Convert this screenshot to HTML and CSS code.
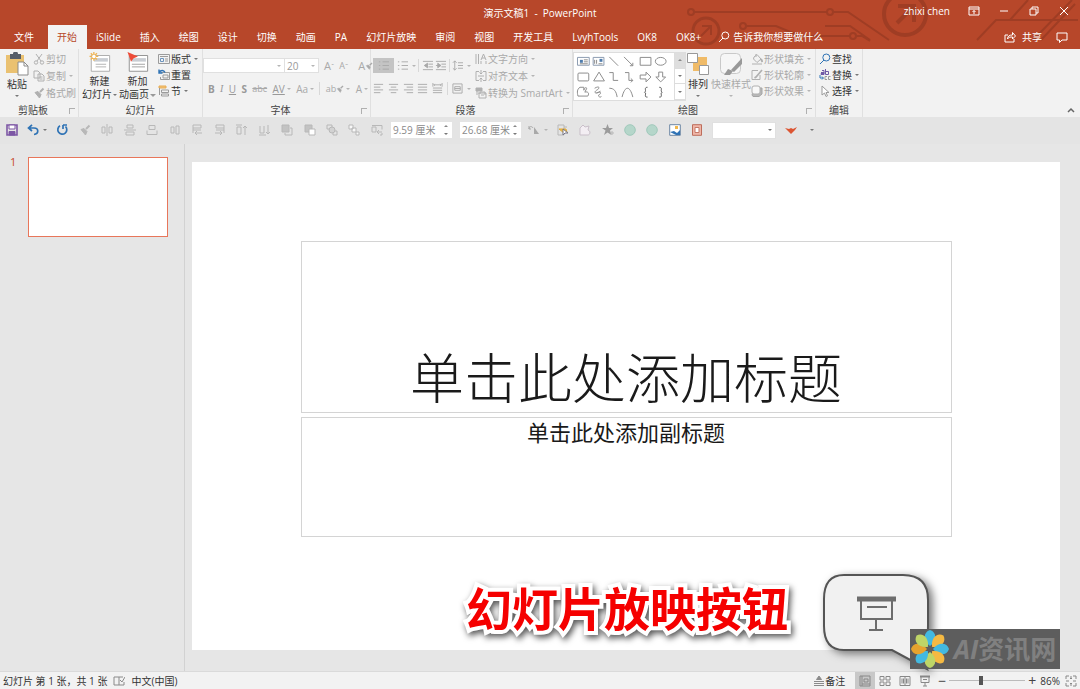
FILE: index.html
```html
<!DOCTYPE html>
<html lang="zh-CN">
<head>
<meta charset="utf-8">
<title>演示文稿1 - PowerPoint</title>
<link rel="stylesheet" href="styles.css">
</head>
<body>
<svg class="defs" aria-hidden="true">
  <symbol id="cut" viewBox="0 0 12 12"><path d="M3 1l5 7M9 1L4 8"/><circle cx="3" cy="9.500" r="1.700"/><circle cx="9" cy="9.500" r="1.700"/></symbol>
  <symbol id="copy" viewBox="0 0 12 12"><path d="M1 1h4l2 2v5H1zM5 4h4l2 2v5H5zM6.500 7h3M6.500 9h3"/></symbol>
  <symbol id="brush" viewBox="0 0 12 12"><path d="M10.500 1.500L7 5" stroke-width="2"/><path d="M2 5.500l3-1 3 3-1.500 3.500z" fill="currentColor"/></symbol>
  <symbol id="layout" viewBox="0 0 12 12"><path d="M.5 1.500h11v9H.5zM2 3.500h8"/><path d="M2.500 5.500h3v3h-3z" stroke="#6d94bd"/><path d="M7 6h3M7 8h3"/></symbol>
  <symbol id="reset" viewBox="0 0 12 12"><path d="M3 3.500h8.500v7h-9V8"/><path d="M5 6h5v3H5z"/><path d="M1 3.500c2-3 5-2.500 6 0M1 .5v3.500h3.500" stroke="#2f73b5" stroke-width="1.400"/></symbol>
  <symbol id="section" viewBox="0 0 12 12"><path d="M1 1h7v2H1z" fill="#f3c57a" stroke="#e8ab50"/><path d="M3.500 5h7v2.500h-7zM3.500 9h7v2h-7zM1.500 3v7"/></symbol>
  <symbol id="textdir" viewBox="0 0 12 12"><path d="M1 1v10M3.500 1v10M6 8v3M11 8v3M6 7l2.500-6L11 7M7 5h3"/></symbol>
  <symbol id="aligntext" viewBox="0 0 12 12"><path d="M4 1.500H1v9h3M8 1.500h3v9H8M6 0v4M4.500 2.500L6 4l1.500-1.500M6 12V8M4.500 9.500L6 8l1.500 1.500M3 6h6"/></symbol>
  <symbol id="smart" viewBox="0 0 12 12"><path d="M1 1h6v3H1z" fill="currentColor"/><path d="M3 6h3M5 5h5v3M4 6h7v5H4zM2 4v4M6 8h3"/></symbol>
  <symbol id="fill" viewBox="0 0 12 12"><path d="M3 4l3-2.500L10 6 6 9.500 2.500 6zM5 4V1M1 11h10"/><path d="M10 6l1.500 3" stroke-width="2"/></symbol>
  <symbol id="outline" viewBox="0 0 12 12"><path d="M7 1.500H1v9h8V6"/><path d="M11 1L5 8l-1.500 1" stroke-width="1.700"/></symbol>
  <symbol id="effect" viewBox="0 0 12 12"><path d="M3 3h8v6L8 11.500H2L1 10z" fill="#b8b8b8" stroke="#a5a5a5"/><rect x="1" y="1" width="8" height="8" rx="2" fill="#f8f8f8"/></symbol>
  <symbol id="search" viewBox="0 0 12 12"><circle cx="7.300" cy="4.500" r="3.500"/><path d="M5 7l-4 4"/></symbol>
  <symbol id="replace" viewBox="0 0 12 12"><path d="M2 3.500h3v2H2v-1h3M3 1.500h2v3M6.500 0v5.500h3v-3h-3" stroke="#715aa6"/><path d="M1 6v3h3M3 7.500L4.500 9 3 10.500" stroke="#2f73b5"/><path d="M8 7.500H6v3h2M11.500 7.500h-2v3h2"/></symbol>
  <symbol id="pointer" viewBox="0 0 12 12"><path d="M3 1v9l2.500-2 1.500 3.500 1.500-.7L7 7.500h3z" fill="#fff"/></symbol>
  <symbol id="list" viewBox="0 0 12 12"><path d="M1 2h1.500M1 6h1.500M1 10h1.500M5 2h7M5 6h7M5 10h7"/></symbol>
  <symbol id="outdent" viewBox="0 0 12 12"><path d="M1 1.500h11M7 4.500h5M7 7.500h5M1 10.500h11"/><path d="M6 3.500v5L2.500 6z" fill="currentColor"/></symbol>
  <symbol id="indent" viewBox="0 0 12 12"><path d="M1 1.500h11M7 4.500h5M7 7.500h5M1 10.500h11M1 6h3"/><path d="M3 3.500v5L6.500 6z" fill="currentColor"/></symbol>
  <symbol id="spacing" viewBox="0 0 12 12"><path d="M3 1v10M1 3l2-2 2 2M1 9l2 2 2-2M6.500 3H12M6.500 6H12M6.500 9H12"/></symbol>
  <symbol id="left" viewBox="0 0 12 12"><path d="M1 1.500h10M1 4.500h7M1 7.500h10M1 10.500h7"/></symbol>
  <symbol id="center" viewBox="0 0 12 12"><path d="M1 1.500h10M3 4.500h6M1 7.500h10M3 10.500h6"/></symbol>
  <symbol id="right" viewBox="0 0 12 12"><path d="M1 1.500h10M4 4.500h7M1 7.500h10M4 10.500h7"/></symbol>
  <symbol id="justify" viewBox="0 0 12 12"><path d="M1 1.500h10M1 4.500h10M1 7.500h10M1 10.500h10"/></symbol>
  <symbol id="distribute" viewBox="0 0 12 12"><path d="M1 0v4M11 0v4M2 2h8M3 1L2 2l1 1M9 1l1 1-1 1M1 5.500h10M1 8h10M1 10.500h10"/></symbol>
  <symbol id="columns" viewBox="0 0 12 12"><path d="M1 1h10v10H1zM3 4h6v4H3zM3 6h6"/></symbol>
  <symbol id="save" viewBox="0 0 12 12"><path d="M1 1h10v10H1z" stroke="#7d57a5" stroke-width="1.600"/><path d="M3 1h6v4H3z" fill="#fff" stroke="#7d57a5"/><path d="M3 7.500h6V11H3z" fill="#7d57a5" stroke="#7d57a5"/></symbol>
  <symbol id="undo" viewBox="0 0 12 12"><path d="M1.500 4H7c5 0 5 6 0 6.500M5 .8L1.500 4 5 7" stroke-width="1.700"/></symbol>
  <symbol id="redo" viewBox="0 0 12 12"><path d="M9.500 2.500A4.500 4.500 0 1 1 4 1.800M7 1h4M7 1v4" stroke-width="1.700"/></symbol>
  <symbol id="alv" viewBox="0 0 12 12"><path d="M6 0v12"/><path d="M1 3h3v6H1zM8 3h3v6H8z"/></symbol>
  <symbol id="alh" viewBox="0 0 12 12"><path d="M0 6h12M3 1h6v3H3zM2 8h8v3H2z"/></symbol>
  <symbol id="alm" viewBox="0 0 12 12"><path d="M3 1.500h6v4H3zM1 6.500v4h10v-4"/></symbol>
  <symbol id="alc" viewBox="0 0 12 12"><path d="M2 3h3v6H2zM7 2h3v8H7z"/></symbol>
  <symbol id="rotl" viewBox="0 0 12 12"><path d="M2 1h8v3H2zM2 6h8M11 9H4M6 7L4 9l2 2M2 4v5"/></symbol>
  <symbol id="rotr" viewBox="0 0 12 12"><path d="M2 1h8v3H2zM2 6h8M1 9h7M6 7l2 2-2 2M10 4v5"/></symbol>
  <symbol id="upb" viewBox="0 0 12 12"><path d="M0 1h6M1 3h4v7H1zM9 11V2M7 4l2-2 2 2"/></symbol>
  <symbol id="downb" viewBox="0 0 12 12"><path d="M0 11h7M1 2v7h4V2M9 1v9M7 8l2 2 2-2"/></symbol>
  <symbol id="front" viewBox="0 0 12 12"><path d="M1 1h7v7H1z" fill="#c3c3c3"/><path d="M9 4h2v7H4V9"/></symbol>
  <symbol id="back" viewBox="0 0 12 12"><path d="M1 1h7v7H1z" fill="#c3c3c3"/><path d="M5 5h6v6H5z" fill="#fff"/></symbol>
  <symbol id="group" viewBox="0 0 12 12"><path d="M1 1h5v4H1zM7 7h4v4H7z"/><circle cx="6" cy="6" r="3" fill="#d2d2d2"/></symbol>
  <symbol id="ungroup" viewBox="0 0 12 12"><path d="M1 1h4v4H1zM4 4h4v4H4zM8 8h3v3H8z" fill="#f8f8f8"/></symbol>
  <symbol id="swap" viewBox="0 0 12 12"><path d="M1 1.500h10v4M1 3h4v5H1zM11 8H6M8 6L6 8l2 2M9 11h2V9"/></symbol>
  <symbol id="tri" viewBox="0 0 12 12"><path d="M1 5c0-3 3-3 4-1M1 2v3h2"/><path d="M6 10V3l5 7z" fill="currentColor" stroke="none"/></symbol>
  <symbol id="selpane" viewBox="0 0 12 12"><path d="M1 1h6v10H1zM7 3h3"/><path d="M2 5h7l1 3-3 1z" fill="#f5c542" stroke="#e0a93c"/><path d="M6 5v6l2-2h3z" fill="#fff" stroke="#778"/></symbol>
  <symbol id="freeform" viewBox="0 0 12 12"><path d="M1 11V4l3-3 2 2 4-1-1 4c3 1 2 5 0 5z" fill="#f3eef3" stroke="#c9bfc9"/></symbol>
  <symbol id="star" viewBox="0 0 12 12"><path d="M5.500 0l1.500 4h4L8 6.500 9.500 11 5.500 8.500 2 11l1.500-4.500L0 4h4z" fill="#9b9b9b" stroke="none"/><path d="M8 9h4M10 7v4"/></symbol>
  <symbol id="dot" viewBox="0 0 12 12"><circle cx="6" cy="6" r="5.300" fill="#b5d6ca" stroke="#9fc8ba"/></symbol>
  <symbol id="pic" viewBox="0 0 12 12"><path d="M.7.700h10.600v10.600H.7z" fill="#fff" stroke="#6c86a3"/><path d="M1 8l4-1 3 2 3-3v5H7z" fill="#2f73b5" stroke="none"/><path d="M6 2h3v3H6z" fill="#f2b84b" stroke="none"/></symbol>
  <symbol id="crop" viewBox="0 0 12 12"><path d="M1.500.7h9v10.600h-9z" fill="#efb6a8" stroke="#bd6d5b"/><path d="M4 3.500h4v5H4z" fill="#fff" stroke="#c67867"/></symbol>
  <symbol id="bird" viewBox="0 0 12 12"><path d="M0 4l4 1 2-1 2 1 4-2-2 3-4 4-4-4z" fill="#dc5532" stroke="none"/></symbol>
  <symbol id="screen" viewBox="0 0 12 12"><path d="M1 1.500h10" stroke-width="2"/><path d="M2 2v5.500h8V2M4 4.500h4M6 7.500V11M4 11h4"/></symbol>
</svg>

<header class="header">
  <svg class="circuit" viewBox="0 0 400 49" aria-hidden="true">
    <g fill="none" stroke="#9f3d24" stroke-width="2">
      <circle cx="11" cy="12" r="3"/><path d="M14 12h133"/><circle cx="150" cy="12" r="3"/><path d="M153 12h15l41 28"/>
      <circle cx="26" cy="31" r="13" stroke-width="3"/><path d="M21 36l10-10M22 26h9v9" stroke-width="2"/>
      <circle cx="63" cy="26" r="3"/><path d="M66 26h30l24 10h50M145 26h25l20 14"/><circle cx="173" cy="36" r="3"/><path d="M176 36h6l8 5"/>
      <circle cx="225" cy="14" r="21" stroke-width="4"/><path d="M217 23l17-17M218 6h16v16" stroke-width="4"/>
      <path d="M297 40l19-20h82M353 40L392 0M361 40l34-36M330 20l18-20"/>
    </g>
  </svg>
  <div class="titlebar">
    <h1 class="doc-title">演示文稿1 &nbsp;-&nbsp; PowerPoint</h1>
    <div class="window-tools">
      <span class="user">zhixi chen</span>
      <button aria-label="功能区显示选项"><svg class="i" viewBox="0 0 12 12"><path d="M1 2h10v8H1zM1 4h10M6 9V5.500M4.500 7L6 5.500 7.500 7"/></svg></button>
      <button aria-label="最小化"><svg class="i" viewBox="0 0 12 12"><path d="M2 6h8"/></svg></button>
      <button aria-label="还原"><svg class="i" viewBox="0 0 12 12"><path d="M2 4h6v6H2zM4 4V2h6v6H8"/></svg></button>
      <button aria-label="关闭"><svg class="i" viewBox="0 0 12 12"><path d="M2 2l8 8M10 2l-8 8"/></svg></button>
    </div>
  </div>
  <div class="tabrow">
    <nav class="tabs">
      <button class="tab file">文件</button><button class="tab active">开始</button><button class="tab">iSlide</button><button class="tab">插入</button><button class="tab">绘图</button><button class="tab">设计</button><button class="tab">切换</button><button class="tab">动画</button><button class="tab">PA</button><button class="tab">幻灯片放映</button><button class="tab">审阅</button><button class="tab">视图</button><button class="tab">开发工具</button><button class="tab">LvyhTools</button><button class="tab">OK8</button><button class="tab">OK8+</button>
      <button class="tell"><svg class="i"><use href="#search"/></svg>告诉我你想要做什么</button>
    </nav>
    <div class="share">
      <button><svg class="i" viewBox="0 0 12 12"><path d="M4 4H1v7h9V8M3.500 8c0-3 2-4 5-4V1.500L11.500 5 8.500 8V6c-2 0-4 0-5 2z"/></svg>共享</button>
      <button aria-label="批注"><svg class="i" viewBox="0 0 12 12"><path d="M1 2h10v7H6l-2.500 2.500V9H1z"/></svg></button>
    </div>
  </div>
</header>

<section class="ribbon">
  <div class="group clipboard">
    <div class="body">
      <button class="big"><svg class="pic" viewBox="0 0 24 24"><path d="M1 3h18v18H1z" fill="#eac171"/><path d="M5 2h3a2.500 2.500 0 0 1 5 0h3v5H5z" fill="#555d68"/><path d="M13 10h6l4 4v9H13z" fill="#fff" stroke="#8b8b8b"/><path d="M19 10v4h4" fill="none" stroke="#8b8b8b"/></svg><span>粘贴</span><i class="caret"></i></button>
      <div class="stack off">
        <button><svg class="i"><use href="#cut"/></svg>剪切</button>
        <button><svg class="i"><use href="#copy"/></svg>复制<i class="caret"></i></button>
        <button><svg class="i"><use href="#brush"/></svg>格式刷</button>
      </div>
    </div>
    <div class="label"><span>剪贴板</span><button class="launch" aria-label="剪贴板选项"></button></div>
  </div>
  <div class="group slides">
    <div class="body">
      <button class="big"><svg class="pic" viewBox="0 0 24 24"><path d="M2 4h21v18H2z" fill="#fff" stroke="#a5a5a5"/><path d="M5 7h16v4H5z" fill="#c9cdd3"/><path d="M7 14h12M7 17h12" stroke="#aaa"/><path d="M5 0v10M0 5h10M1.500 1.500l7 7M8.500 1.500l-7 7" stroke="#f0b452" stroke-width="1.500"/><circle cx="5" cy="5" r="2" fill="#fff"/></svg><span>新建</span><span>幻灯片<i class="caret"></i></span></button>
      <button class="big"><svg class="pic" viewBox="0 0 24 24"><path d="M2 4h21v18H2z" fill="#fff" stroke="#888"/><path d="M5 7h16v4H5z" fill="#c9cdd3"/><path d="M5 14h15M5 17h15" stroke="#999"/><path d="M0 0l12 5-5 2-3 4z" fill="#ed4b38"/></svg><span>新加</span><span>动画页<i class="caret hollow"></i></span></button>
      <div class="stack tight">
        <button><svg class="i"><use href="#layout"/></svg>版式<i class="caret"></i></button>
        <button><svg class="i"><use href="#reset"/></svg>重置</button>
        <button><svg class="i"><use href="#section"/></svg>节<i class="caret"></i></button>
      </div>
    </div>
    <div class="label"><span>幻灯片</span></div>
  </div>
  <div class="group font off">
    <div class="body rows">
      <div class="row">
        <label class="combo face"><select aria-label="字体"><option></option></select><i class="caret"></i></label>
        <label class="combo size"><select aria-label="字号"><option>20</option></select><i class="caret"></i></label>
        <button class="glyph grow">A<sup>ˆ</sup></button><button class="glyph shrink">A<sup>ˇ</sup></button><i class="sep"></i><button class="glyph" aria-label="清除格式">A<svg class="i mini"><use href="#brush"/></svg></button>
      </div>
      <div class="row marks">
        <button class="glyph"><b>B</b></button><button class="glyph serif"><em>I</em></button><button class="glyph"><u>U</u></button><button class="glyph"><b>S</b></button><button class="glyph small"><s>abc</s></button>
        <button class="glyph"><u>AV</u><i class="caret"></i></button><button class="glyph">Aa<i class="caret"></i></button><i class="sep"></i><button class="glyph small">ab<svg class="i mini"><use href="#brush"/></svg><i class="caret"></i></button><button class="glyph">A<i class="caret"></i></button>
      </div>
    </div>
    <div class="label"><span>字体</span><button class="launch" aria-label="字体选项"></button></div>
  </div>
  <div class="group paragraph off">
    <div class="body">
      <div class="rows">
        <div class="row">
          <button class="pressed" aria-label="项目符号"><svg class="i"><use href="#list"/></svg></button><button aria-label="编号"><svg class="i"><use href="#list"/></svg><i class="caret"></i></button><i class="sep"></i><button aria-label="减少缩进"><svg class="i"><use href="#outdent"/></svg></button><button aria-label="增加缩进"><svg class="i"><use href="#indent"/></svg></button><i class="sep"></i><button aria-label="行距"><svg class="i"><use href="#spacing"/></svg><i class="caret"></i></button>
        </div>
        <div class="row aligns">
          <button aria-label="左对齐"><svg class="i"><use href="#left"/></svg></button><button aria-label="居中"><svg class="i"><use href="#center"/></svg></button><button aria-label="右对齐"><svg class="i"><use href="#right"/></svg></button><button aria-label="两端对齐"><svg class="i"><use href="#justify"/></svg></button><button aria-label="分散对齐"><svg class="i"><use href="#distribute"/></svg></button><i class="sep"></i><button aria-label="分栏"><svg class="i"><use href="#columns"/></svg><i class="caret"></i></button>
        </div>
      </div>
      <div class="stack">
        <button><svg class="i"><use href="#textdir"/></svg>文字方向<i class="caret"></i></button>
        <button><svg class="i"><use href="#aligntext"/></svg>对齐文本<i class="caret"></i></button>
        <button><svg class="i"><use href="#smart"/></svg>转换为 SmartArt<i class="caret"></i></button>
      </div>
    </div>
    <div class="label"><span>段落</span><button class="launch" aria-label="段落选项"></button></div>
  </div>
  <div class="group drawing">
    <div class="body">
      <div class="gallery">
        <svg class="shapes" viewBox="0 0 100 48" aria-label="形状"><g fill="none" stroke="#8b8b8b">
          <path d="M2.500 4.500h12v8h-12z" stroke="#8b9bb0"/><path d="M5 7h3v3H5z" fill="#4f7cac" stroke="none"/><path d="M9 7h4M9 9h4M5 11h8"/>
          <path d="M18.500 4.500h11v8h-11z" stroke="#8b9bb0"/><path d="M25 6h3v3h-3z" fill="#4f7cac" stroke="none"/><path d="M20 7v4M22 7v4M24 11h4"/>
          <path d="M35 4l9 9M50 4l9 9M59 10v3h-3M66.500 4.500h11v8h-11z"/><ellipse cx="87.500" cy="8.500" rx="5.500" ry="4"/>
          <rect x="3" y="20.500" width="11" height="8" rx="1"/><path d="M24.500 19.500l5.500 9H19zM35 20h4v8h5M51 20h4v8h4M57 26l2 2-2 2M66.500 22.500h6v-3l5 5-5 5v-3h-6zM85.500 19.500h4v5h3l-5 5-5-5h3z"/>
          <path d="M9 35H5c-3 2-3 5-2 9h10c2-3 0-5-3-4l2-4c-1-1-2-1-3 2zM20 36c5-3 6 0 2 2-4 3 0 4 4 1M22 41c5-3 5 1 2 2 0 2 2 3 3 1M35 36c5 0 7 3 8 9M48 45c3-12 8-12 11 0"/>
          <path d="M74 35c-3 0-2 2-2 4l-1 1 1 1c0 3-1 4 2 4M86 35c3 0 2 2 2 4l1 1-1 1c0 3 1 4-2 4" stroke="#555"/>
        </g></svg>
        <div class="scroll"><button aria-label="上一行"><i class="caret up"></i></button><button aria-label="下一行"><i class="caret"></i></button><button aria-label="更多形状"><i class="caret"></i></button></div>
      </div>
      <button class="big"><svg class="pic" viewBox="0 0 24 24"><path d="M7 5h14v14H7z" fill="#f0bb68"/><path d="M1.500 1.500h10v9h-10zM13.500 13.500h9v9h-9z" fill="#fff" stroke="#999"/></svg><span>排列</span><i class="caret"></i></button>
      <button class="big off quick"><svg class="pic" viewBox="0 0 24 24"><rect x="1.500" y="1.500" width="20" height="20" rx="4" fill="#f6f6f6" stroke="#c9c9c9"/><path d="M23 6v6l-8 8-3-2z" fill="#999"/><path d="M5 23l4-6 5 2-3 4z" fill="#999"/></svg><span>快速样式</span><i class="caret"></i></button>
      <div class="stack tight off">
        <button><svg class="i"><use href="#fill"/></svg>形状填充<i class="caret"></i></button>
        <button><svg class="i"><use href="#outline"/></svg>形状轮廓<i class="caret"></i></button>
        <button><svg class="i"><use href="#effect"/></svg>形状效果<i class="caret"></i></button>
      </div>
    </div>
    <div class="label"><span>绘图</span><button class="launch" aria-label="绘图选项"></button></div>
  </div>
  <div class="group editing">
    <div class="body">
      <div class="stack tight">
        <button><svg class="i blue"><use href="#search"/></svg>查找</button>
        <button><svg class="i"><use href="#replace"/></svg>替换<i class="caret"></i></button>
        <button><svg class="i"><use href="#pointer"/></svg>选择<i class="caret"></i></button>
      </div>
    </div>
    <div class="label"><span>编辑</span></div>
  </div>
  <button class="collapse" aria-label="折叠功能区"><svg class="i" viewBox="0 0 12 12"><path d="M3 8l3-3 3 3" stroke-width="1.500"/></svg></button>
</section>

<div class="quickbar">
  <button aria-label="保存"><svg class="i"><use href="#save"/></svg></button>
  <button class="blue" aria-label="撤消"><svg class="i"><use href="#undo"/></svg><i class="caret"></i></button>
  <button class="blue" aria-label="重做"><svg class="i"><use href="#redo"/></svg></button>
  <div class="strip">
    <svg class="i"><use href="#brush"/></svg><svg class="i"><use href="#alv"/></svg><svg class="i"><use href="#alh"/></svg><svg class="i"><use href="#alm"/></svg><svg class="i"><use href="#alc"/></svg><svg class="i"><use href="#rotl"/></svg><svg class="i"><use href="#rotr"/></svg><svg class="i"><use href="#upb"/></svg><svg class="i"><use href="#downb"/></svg><svg class="i"><use href="#front"/></svg><svg class="i"><use href="#back"/></svg><svg class="i"><use href="#group"/></svg><svg class="i"><use href="#ungroup"/></svg><svg class="i"><use href="#swap"/></svg>
  </div>
  <label class="spin"><input type="text" value="9.59 厘米" aria-label="高度"><span><i class="caret up"></i><i class="caret"></i></span></label>
  <label class="spin"><input type="text" value="26.68 厘米" aria-label="宽度"><span><i class="caret up"></i><i class="caret"></i></span></label>
  <button class="tri off" aria-label="旋转"><svg class="i"><use href="#tri"/></svg><i class="caret"></i></button>
  <div class="strip second">
    <svg class="i"><use href="#selpane"/></svg><svg class="i"><use href="#freeform"/></svg><svg class="i"><use href="#star"/></svg><svg class="i"><use href="#dot"/></svg><svg class="i"><use href="#dot"/></svg><svg class="i"><use href="#pic"/></svg><svg class="i"><use href="#crop"/></svg>
  </div>
  <label class="combo macro"><select aria-label="样式"><option></option></select><i class="caret"></i></label>
  <button aria-label="插件"><svg class="i"><use href="#bird"/></svg></button>
  <button aria-label="自定义快速访问工具栏"><i class="caret"></i></button>
</div>

<main class="work">
  <aside class="thumbs"><span class="num">1</span><button class="thumb" aria-label="幻灯片 1"></button></aside>
  <div class="canvas">
    <article class="slide">
      <h2 class="holder title">单击此处添加标题</h2>
      <p class="holder subtitle">单击此处添加副标题</p>
    </article>
  </div>
  <div class="note">幻灯片放映按钮</div>
  <svg class="callout" viewBox="0 0 130 110" aria-hidden="true">
    <path d="M29 10H88Q113 10 113 35V60Q113 83 106 88L112 104 77 85H29Q9 85 9 61V34Q9 10 29 10Z" fill="#f1f1f1" stroke="#555" stroke-width="2"/>
    <g fill="none" stroke="#6d6d6d" stroke-width="2"><path d="M42 34h39" stroke-width="5"/><path d="M46 36v18h31V36M52 42h20M61 54v11M54 65h14"/></g>
  </svg>
  <div class="brand">
    <svg viewBox="0 0 40 40" aria-hidden="true">
      <defs><path id="petal-y" d="M20 17C13 12 13 3 20 1c7 2 7 11 0 16z" fill="#f5b942"/><path id="petal-b" d="M20 17C13 12 13 3 20 1c7 2 7 11 0 16z" fill="#43b9e0"/><path id="petal-g" d="M20 17C13 12 13 3 20 1c7 2 7 11 0 16z" fill="#bed567"/><path id="petal-o" d="M20 17C13 12 13 3 20 1c7 2 7 11 0 16z" fill="#e6a32e"/></defs>
      <use href="#petal-b"/><use href="#petal-y" transform="rotate(45 20 20)"/><use href="#petal-b" transform="rotate(90 20 20)"/><use href="#petal-y" transform="rotate(135 20 20)"/><use href="#petal-g" transform="rotate(180 20 20)"/><use href="#petal-b" transform="rotate(225 20 20)"/><use href="#petal-o" transform="rotate(270 20 20)"/><use href="#petal-g" transform="rotate(315 20 20)"/>
    </svg><span><em>AI</em>资讯网</span>
  </div>
</main>

<footer class="status">
  <span>幻灯片 第 1 张，共 1 张</span>
  <svg class="i soft" viewBox="0 0 12 12"><path d="M6 2H1v8h5M6 2v8M6 2h4M6 10h5V7M7 5l2 2 3-5"/></svg>
  <span>中文(中国)</span>
  <div class="status-right">
    <button class="notes"><svg class="i soft" viewBox="0 0 12 12"><path d="M6 1L3.500 4.500h5z" fill="currentColor"/><path d="M1 6.500h10M1 8.500h10M1 10.500h10"/></svg>备注</button>
    <button class="view on" aria-label="普通视图"><svg class="i" viewBox="0 0 12 12"><path d="M1 1h10v10H1zM3 1v10M5 4h4v3H5zM3 9h8"/></svg></button>
    <button class="view" aria-label="幻灯片浏览"><svg class="i" viewBox="0 0 12 12"><path d="M1 1.500h4v3.500H1zM7 1.500h4v3.500H7zM1 7h4v3.500H1zM7 7h4v3.500H7z"/></svg></button>
    <button class="view" aria-label="阅读视图"><svg class="i" viewBox="0 0 12 12"><path d="M1 1.500h10v9H1zM6 1v10M3 3.500v5M4.500 3.500v5M7.500 3.500v5M9 3.500v5"/></svg></button>
    <button class="view" aria-label="幻灯片放映"><svg class="i"><use href="#screen"/></svg></button>
    <button class="zoom-step" aria-label="缩小">−</button>
    <input class="zoom" type="range" min="10" max="400" value="172" aria-label="缩放">
    <button class="zoom-step" aria-label="放大">+</button>
    <span class="percent">86%</span>
    <button aria-label="适应窗口"><svg class="i" viewBox="0 0 12 12"><path d="M1 4V1h3M8 1h3v3M11 8v3H8M4 11H1V8M6 1v3M6 8v3M1 6h3M8 6h3M5 3l1 1 1-1M5 9l1-1 1 1"/></svg></button>
  </div>
</footer>
</body>
</html>
```
FILE: styles.css
```css
* { box-sizing: border-box; }
body {
  margin: 0;
  min-height: 100vh;
  display: flex;
  flex-direction: column;
  background: #e6e6e6;
  color: #333;
  font: 10px/14px "Open Sans", "Noto Sans CJK SC", sans-serif;
}
button {
  display: flex;
  align-items: center;
  margin: 0;
  padding: 0;
  border: 0;
  background: none;
  color: inherit;
  font: inherit;
  white-space: nowrap;
}
.defs { position: absolute; width: 0; height: 0; }
.i {
  flex: none;
  width: 12px;
  height: 12px;
  fill: none;
  stroke: currentColor;
}
.mini { width: 8px; height: 8px; }
.soft { color: #8a8a8a; }
.blue { color: #2f73b5; }
.off { color: #a9a9a9; }
.caret {
  flex: none;
  display: inline-block;
  margin-left: 4px;
  border: 2px solid transparent;
  border-top-color: #777;
  border-bottom: 0;
  vertical-align: middle;
}
.off .caret { border-top-color: #b5b5b5; }
.caret.up { border-top: 0; border-bottom: 2px solid #888; }
.caret.hollow { border-width: 3px; border-bottom: 0; border-top-color: #999; }
.sep { width: 1px; height: 13px; background: #d8d8d8; }

/* Title bar and tabs */
.header { position: relative; background: #b7472a; color: #fff; }
.circuit { position: absolute; right: 0; top: 0; width: 400px; height: 49px; }
.titlebar {
  position: relative;
  display: grid;
  grid-template-columns: 1fr auto 1fr;
  align-items: center;
  height: 25px;
}
.doc-title { grid-column: 2; margin: 0; font: inherit; }
.window-tools {
  display: flex;
  align-items: center;
  justify-content: flex-end;
  gap: 18px;
  padding: 0 10px 3px 0;
}
.tabrow { position: relative; display: flex; justify-content: space-between; height: 24px; }
.tabs { display: flex; }
.tab { padding: 0 10px 0 9px; }
.tab.file { padding: 0 14px; }
.tab.active { background: #f3f3f3; color: #b7472a; }
.tell { gap: 3px; padding-left: 7px; }
.share { display: flex; gap: 14px; padding-right: 12px; }
.share button { gap: 6px; }

/* Ribbon */
.ribbon { display: flex; height: 68px; background: #f2f2f2; }
.group {
  display: flex;
  flex-direction: column;
  justify-content: space-between;
  border-right: 1px solid #e0e0e0;
}
.clipboard { width: 79px; }
.slides { width: 124px; }
.font { width: 168px; }
.paragraph { width: 202px; }
.drawing { width: 243px; }
.editing { width: 47px; }
.body { display: flex; height: 52px; padding-top: 2px; }
.label { display: flex; height: 13px; color: #444; line-height: 12px; }
.label span { flex: 1; text-align: center; }
.launch { width: 12px; justify-content: center; }
.launch::before {
  content: "";
  width: 5px;
  height: 5px;
  border: 1px solid #b0b0b0;
  border-width: 1px 0 0 1px;
}
.big { flex-direction: column; justify-content: flex-start; line-height: 13px; }
.big .pic { width: 24px; height: 24px; margin: 1px 0 2px; }
.big > .caret { margin: 4px 0 0; }
.big span .caret { margin-left: 1px; }
.stack { display: flex; flex-direction: column; justify-content: space-between; }
.stack button { gap: 1px; height: 16px; }
.stack.tight { justify-content: flex-start; }
.stack .i { color: #9b9b9b; }
.off .stack .i, .stack.off .i { color: #b0b0b0; }
.stack .i.blue { color: #2f73b5; }
.stack .caret { margin-left: 2px; }
.clipboard .body { gap: 4px; padding-left: 5px; }
.slides .body { gap: 2px; padding-left: 3px; }
.rows { display: flex; flex-direction: column; gap: 8px; padding-top: 7px; }
.font .rows { padding-top: 9px; }
.row { display: flex; align-items: center; gap: 5px; height: 15px; }
.combo { display: flex; flex: none; align-items: center; height: 15px; padding-right: 3px; background: #fff; border: 1px solid #e0e0e0; }
.combo select { flex: 1; min-width: 0; padding: 0 2px; border: 0; background: none; appearance: none; color: #999; font: inherit; }
.combo.face { width: 82px; margin-right: -6px; }
.combo.size { width: 35px; }
.glyph { font-size: 11px; }
.glyph sup { font-size: 8px; line-height: 8px; }
.glyph.shrink, .glyph.small { font-size: 9px; }
.glyph.serif { font-family: "Liberation Serif", serif; }
.marks { gap: 0; justify-content: space-between; padding: 0 2px 0 5px; }
.marks .glyph { font-size: 10px; }
.marks .glyph.small { font-size: 9px; }
.marks .caret { margin-left: 2px; }
.marks b, .marks u, .marks em { color: #999; }
.paragraph .body { gap: 4px; padding-left: 2px; }
.paragraph .rows { width: 98px; }
.paragraph .row { gap: 1px; justify-content: space-between; }
.paragraph .rows .i { width: 11px; height: 11px; }
.pressed { width: 21px; height: 15px; justify-content: center; background: #c4c4c4; }
.gallery { display: flex; height: 49px; margin-top: 1px; border: 1px solid #ddd; background: #fff; }
.shapes { width: 100px; height: 47px; }
.scroll { display: flex; flex-direction: column; width: 11px; border-left: 1px solid #ddd; }
.scroll button { flex: 1; justify-content: center; border-bottom: 1px solid #ddd; }
.scroll button:first-child { background: #dedede; }
.scroll .caret { margin: 0; }
.quick { margin-left: 1px; }
.editing .body { padding-left: 3px; }
.collapse { align-self: flex-end; margin-left: auto; padding: 0 3px 1px 0; color: #666; }

/* Quick access toolbar */
.quickbar { display: flex; align-items: center; height: 27px; padding: 0 0 1px 6px; gap: 9px; background: #e4e4e4; }
.quickbar .blue .caret { margin-left: 4px; }
.strip { display: flex; justify-content: space-between; width: 304px; margin-left: 2px; color: #b8b8b8; }
.strip.second { width: 146px; margin: 0; }
.spin { display: flex; width: 61px; height: 16px; margin-left: -1px; padding-right: 4px; background: #fff; }
.spin input { flex: 1; min-width: 0; padding: 0 0 0 2px; border: 0; background: none; color: #8a8a8a; font: inherit; }
.spin span { display: flex; flex-direction: column; justify-content: space-around; }
.spin .caret { margin: 0; }
.tri { margin-left: -2px; }
.combo.macro { width: 64px; height: 17px; }

/* Work area */
.work { position: relative; display: flex; flex: 1; }
.thumbs { display: flex; align-items: flex-start; width: 185px; padding: 13px 16px 0 10px; gap: 12px; border-right: 1px solid #d2d2d2; }
.num { color: #c8492a; font-size: 11px; line-height: 10px; }
.thumb { flex: 1; height: 80px; border: 1px solid #e8765a; background: #fff; }
.canvas { flex: 1; padding: 18px 20px 20px 7px; }
.slide {
  display: flex;
  flex-direction: column;
  align-items: center;
  gap: 4px;
  width: 100%;
  aspect-ratio: 16 / 9;
  padding-top: 79px;
  background: #fff;
  color: #1a1a1a;
}
.holder { width: 75%; margin: 0; border: 1px solid #d4d4d4; text-align: center; font-family: "Noto Sans CJK SC", sans-serif; }
.title { display: flex; align-items: flex-end; justify-content: center; height: 172px; font-size: 54px; line-height: 72px; font-weight: 300; }
.subtitle { height: 120px; font-size: 22px; line-height: 26px; }
.note {
  position: absolute;
  right: 292px;
  bottom: 35px;
  color: #f50000;
  font: 700 46px/60px "Noto Sans CJK SC", sans-serif;
  -webkit-text-stroke: 8px #fff;
  paint-order: stroke fill;
  filter: drop-shadow(2px 3px 3px #555);
}
.callout { position: absolute; right: 135px; bottom: -4px; width: 130px; height: 110px; filter: drop-shadow(4px 3px 4px #777); }
.brand { position: absolute; right: 20px; bottom: 2px; display: flex; align-items: center; width: 150px; height: 40px; background: #5d5d5d; color: #808080; font: 700 26px/38px "Open Sans", "Noto Sans CJK SC", sans-serif; white-space: nowrap; }
.brand svg { width: 40px; height: 40px; }
.brand span { flex: 1; text-align: center; }

/* Status bar */
.status { display: flex; align-items: center; gap: 6px; height: 18px; padding-left: 3px; border-top: 1px solid #dadada; background: #f2f2f2; }
.status-right { display: flex; align-items: center; margin-left: auto; padding-right: 3px; color: #888; }
.notes { margin-right: 10px; color: #333; }
.view { width: 20px; height: 17px; justify-content: center; }
.view.on { background: #c8c8c8; }
.zoom-step { width: 14px; justify-content: center; color: #444; font-size: 14px; }
.zoom { width: 76px; height: 12px; margin: 0; appearance: none; background: linear-gradient(#bbb, #bbb) center / 100% 1px no-repeat; }
.zoom::-webkit-slider-thumb { appearance: none; width: 4px; height: 9px; background: #555; }
.percent { margin: 0 5px 0 1px; color: #333; }
```
